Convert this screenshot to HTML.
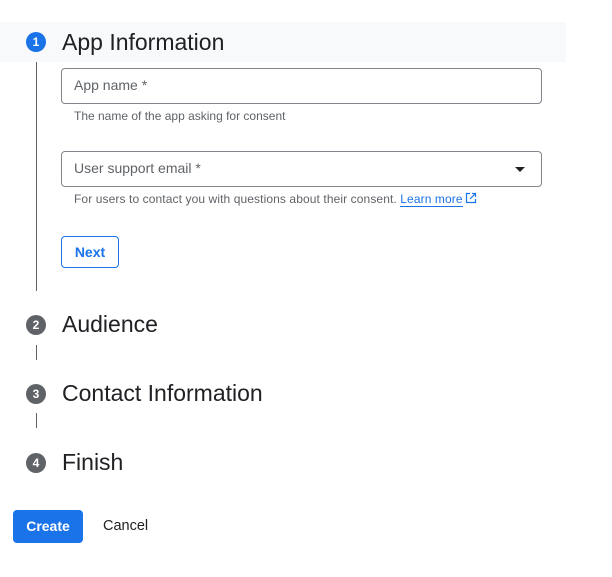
<!DOCTYPE html>
<html><head><style>
body{margin:0;width:612px;height:577px;background:#fff;font-family:"Liberation Sans",Arial,sans-serif;position:relative;overflow:hidden}
.a{position:absolute}
.bar{left:0;top:22px;width:566px;height:40px;background:#f8f9fa}
.c{width:20px;height:20px;border-radius:50%;color:#fff;font-size:12px;font-weight:bold;text-align:center;line-height:20px}
.t{font-size:23px;color:#202124;line-height:24px}
.vl{width:1px;background:#5f6368}
.in{left:61px;width:481px;height:34px;border:1px solid #80868b;border-radius:4px;box-sizing:border-box}
.ph{font-size:14px;color:#5f6368;left:12px;top:8px}
.h{font-size:12px;color:#5f6368}
</style></head><body>
<div class="a bar"></div>
<div class="a c" style="left:26px;top:32px;background:#1a73e8">1</div>
<div class="a t" style="left:62px;top:30px">App Information</div>
<div class="a vl" style="left:36px;top:62px;height:229px"></div>
<div class="a in" style="top:68px;height:36px"><div class="a ph">App name *</div></div>
<div class="a h" style="left:74px;top:109px">The name of the app asking for consent</div>
<div class="a in" style="top:151px;height:36px"><div class="a ph">User support email *</div>
<div class="a" style="right:16px;top:15px;width:0;height:0;border-left:5px solid transparent;border-right:5px solid transparent;border-top:5px solid #202124"></div></div>
<div class="a h" style="left:74px;top:192px;letter-spacing:0.1px">For users to contact you with questions about their consent. <span style="color:#1a73e8;border-bottom:1px solid #1a73e8">Learn more</span><svg width="12" height="12" viewBox="0 0 12 12" style="vertical-align:-1px;margin-left:2px"><path d="M5 1.5H1.5v9h9V7M7 1.5h3.5V5M10.5 1.5L5 7" fill="none" stroke="#1a73e8" stroke-width="1.2"/></svg></div>
<div class="a" style="left:61px;top:236px;width:58px;height:32px;border:1px solid #1a73e8;border-radius:4px;box-sizing:border-box;color:#1a73e8;font-size:14px;font-weight:bold;text-align:center;line-height:30px">Next</div>
<div class="a c" style="left:26px;top:315px;background:#5f6368">2</div>
<div class="a t" style="left:62px;top:312px">Audience</div>
<div class="a vl" style="left:36px;top:345px;height:15px"></div>
<div class="a c" style="left:26px;top:384px;background:#5f6368">3</div>
<div class="a t" style="left:62px;top:381px">Contact Information</div>
<div class="a vl" style="left:36px;top:413px;height:15px"></div>
<div class="a c" style="left:26px;top:453px;background:#5f6368">4</div>
<div class="a t" style="left:62px;top:450px">Finish</div>
<div class="a" style="left:13px;top:510px;width:70px;height:33px;background:#1a73e8;border-radius:4px;color:#fff;font-size:14px;font-weight:bold;text-align:center;line-height:33px">Create</div>
<div class="a" style="left:103px;top:518px;font-size:14.5px;color:#202124">Cancel</div>
</body></html>
